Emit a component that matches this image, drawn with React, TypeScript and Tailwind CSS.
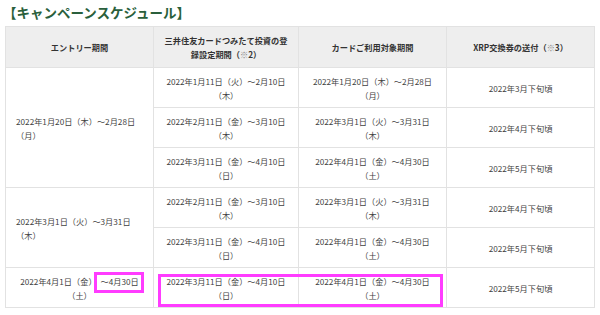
const font = { fontFamily: '"Noto Sans CJK JP", "Noto Sans", sans-serif' };

type Cell = { lines: string[]; rowSpan?: number; align?: 'left' | 'center' };

const rows: Cell[][] = [
  [
    { lines: ['2022年1月20日（木）～2月28日', '（月）'], rowSpan: 3, align: 'left' },
    { lines: ['2022年1月11日（火）～2月10日', '（木）'] },
    { lines: ['2022年1月20日（木）～2月28日', '（月）'] },
    { lines: ['2022年3月下旬頃'] },
  ],
  [
    { lines: ['2022年2月11日（金）～3月10日', '（木）'] },
    { lines: ['2022年3月1日（火）～3月31日', '（木）'] },
    { lines: ['2022年4月下旬頃'] },
  ],
  [
    { lines: ['2022年3月11日（金）～4月10日', '（日）'] },
    { lines: ['2022年4月1日（金）～4月30日', '（土）'] },
    { lines: ['2022年5月下旬頃'] },
  ],
  [
    { lines: ['2022年3月1日（火）～3月31日', '（木）'], rowSpan: 2, align: 'left' },
    { lines: ['2022年2月11日（金）～3月10日', '（木）'] },
    { lines: ['2022年3月1日（火）～3月31日', '（木）'] },
    { lines: ['2022年4月下旬頃'] },
  ],
  [
    { lines: ['2022年3月11日（金）～4月10日', '（日）'] },
    { lines: ['2022年4月1日（金）～4月30日', '（土）'] },
    { lines: ['2022年5月下旬頃'] },
  ],
];

const lastRow: Cell[] = [
  { lines: ['2022年3月11日（金）～4月10日', '（日）'] },
  { lines: ['2022年4月1日（金）～4月30日', '（土）'] },
  { lines: ['2022年5月下旬頃'] },
];

function Lines({ lines }: { lines: string[] }) {
  return (
    <>
      {lines.map((l, i) => (
        <span key={i} className="block whitespace-nowrap">{l}</span>
      ))}
    </>
  );
}

const td = 'border border-[#e2e2e2] align-middle';

export default function App() {
  return (
    <div className="relative w-[600px] h-[315px] bg-white overflow-hidden" style={font}>
      <h2 className="h-[26px] pl-[3px] pt-[3px] text-[13.5px] leading-[19px] font-bold text-[#2a5f3c]">
        【キャンペーンスケジュール】
      </h2>
      <table className="ml-[5px] w-[589px] table-fixed border-collapse text-[8.2px] leading-[14px] text-[#3f3f3f]">
        <colgroup>
          <col className="w-[148px]" />
          <col className="w-[145px]" />
          <col className="w-[148px]" />
          <col className="w-[148px]" />
        </colgroup>
        <thead>
          <tr className="h-[41px] bg-[#eeeeee] text-[#333] font-bold">
            <th className="border border-[#e2e2e2] text-center font-bold">エントリー期間</th>
            <th className="border border-[#e2e2e2] text-center font-bold">
              <span className="block whitespace-nowrap">三井住友カードつみたて投資の登</span>
              <span className="block whitespace-nowrap">
                録設定期間（<span className="text-[#888]">※</span>2）
              </span>
            </th>
            <th className="border border-[#e2e2e2] text-center font-bold">カードご利用対象期間</th>
            <th className="border border-[#e2e2e2] text-center font-bold">
              XRP交換券の送付（<span className="text-[#888]">※</span>3）
            </th>
          </tr>
        </thead>
        <tbody>
          {rows.map((r, i) => (
            <tr key={i} className="h-[40px]">
              {r.map((c, j) => (
                <td
                  key={j}
                  rowSpan={c.rowSpan}
                  className={td + ' ' + (c.align === 'left' ? 'text-left pl-[10px]' : 'text-center')}
                >
                  <Lines lines={c.lines} />
                </td>
              ))}
            </tr>
          ))}
          <tr className="h-[40px]">
            <td className={td + ' text-center'}>
              <span className="block whitespace-nowrap">
                2022年4月1日（金）<span className="ml-[4px]">～4月30日</span>
              </span>
              <span className="block whitespace-nowrap">（土）</span>
            </td>
            {lastRow.map((c, j) => (
              <td key={j} className={td + ' text-center'}>
                <Lines lines={c.lines} />
              </td>
            ))}
          </tr>
        </tbody>
      </table>
      {/* highlight marks */}
      <div className="absolute left-[94px] top-[272px] w-[50px] h-[21px] border-[3px] border-[#ff3cff]" />
      <div className="absolute left-[158px] top-[274px] w-[285px] h-[33px] border-[3px] border-[#ff3cff]" />
    </div>
  );
}
